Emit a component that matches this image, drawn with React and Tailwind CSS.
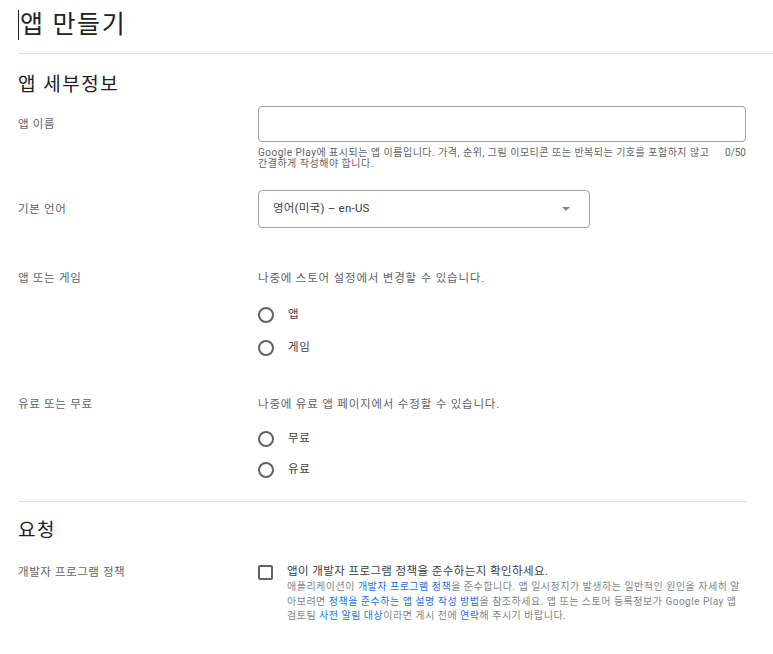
import { useState } from "react";

const font = "font-['Roboto','Noto_Sans_CJK_KR',sans-serif]";

const Radio = ({ label, checked, onClick }) => (
  <button onClick={onClick} className="flex h-[24px] items-center gap-[14px] text-left">
    <span className="flex h-[16px] w-[16px] items-center justify-center rounded-full border-2 border-[#5f6368]">
      {checked && <span className="h-[8px] w-[8px] rounded-full bg-[#1a73e8]" />}
    </span>
    <span className="text-[11.5px] tracking-[0.06em] text-[#3c4043]">{label}</span>
  </button>
);

const Link = ({ children }) => <span className="text-[#1a73e8]">{children}</span>;

export default function App() {
  const [type, setType] = useState(null);
  const [price, setPrice] = useState(null);
  const [agree, setAgree] = useState(false);
  const [name, setName] = useState("");

  return (
    <div className={`${font} min-h-[654px] bg-white pl-[18px] pt-[10px] text-[#202124]`}>
      {/* Title */}
      <div className="flex h-[30px] items-center">
        <span className="h-[30px] w-px bg-[#202124]" />
        <h1 className="pl-[1px] text-[25px] leading-[30px] font-normal tracking-[0.065em]">앱 만들기</h1>
      </div>
      <div className="mt-[13px] h-px bg-[#e0e0e0]" />

      <div className="pr-[27px]">
        {/* App details */}
        <h2 className="mt-[19px] text-[19px] leading-[24px] tracking-[0.08em]">앱 세부정보</h2>

        <div className="mt-[9px] flex">
          <div className="w-[240px] pt-[10px] text-[11.5px] leading-[16px] tracking-[0.06em] text-[#5f6368]">앱 이름</div>
          <div className="flex-1">
            <input
              value={name}
              onChange={(e) => setName(e.target.value.slice(0, 50))}
              className="h-[36px] w-full rounded-[4px] border border-[#9aa0a6] px-3 text-[12px] outline-none"
            />
            <div className="mt-[5px] flex justify-between text-[10px] leading-[11px] text-[#5f6368]">
              <p className="whitespace-nowrap tracking-[0.05em]">
                Google Play에 표시되는 앱 이름입니다. 가격, 순위, 그림 이모티콘 또는 반복되는 기호를 포함하지 않고
                <br />
                간결하게 작성해야 합니다.
              </p>
              <span>{name.length}/50</span>
            </div>
          </div>
        </div>

        <div className="mt-[21px] flex">
          <div className="w-[240px] pt-[11px] text-[11.5px] leading-[16px] tracking-[0.06em] text-[#5f6368]">기본 언어</div>
          <div className="flex h-[38px] w-[332px] items-center justify-between rounded-[4px] border border-[#9aa0a6] pl-[14px] pr-[19px] text-[11.5px] text-[#3c4043]">
            <span className="tracking-[0.02em]">영어(미국) – en-US</span>
            <svg width="8" height="4" viewBox="0 0 8 4">
              <path d="M0 0h8L4 4z" fill="#8a8a8a" />
            </svg>
          </div>
        </div>

        {/* App or game */}
        <div className="mt-[42px] flex">
          <div className="w-[240px] text-[11.5px] leading-[16px] tracking-[0.06em] text-[#5f6368]">앱 또는 게임</div>
          <div className="flex-1">
            <p className="text-[11.5px] leading-[16px] tracking-[0.07em] text-[#5f6368]">나중에 스토어 설정에서 변경할 수 있습니다.</p>
            <div className="mt-[17px] flex flex-col gap-[9px]">
              <Radio label="앱" checked={type === "app"} onClick={() => setType("app")} />
              <Radio label="게임" checked={type === "game"} onClick={() => setType("game")} />
            </div>
          </div>
        </div>

        {/* Paid or free */}
        <div className="mt-[36px] flex">
          <div className="w-[240px] text-[11.5px] leading-[16px] tracking-[0.06em] text-[#5f6368]">유료 또는 무료</div>
          <div className="flex-1">
            <p className="text-[11.5px] leading-[16px] tracking-[0.07em] text-[#5f6368]">나중에 유료 앱 페이지에서 수정할 수 있습니다.</p>
            <div className="mt-[15px] flex flex-col gap-[7px]">
              <Radio label="무료" checked={price === "free"} onClick={() => setPrice("free")} />
              <Radio label="유료" checked={price === "paid"} onClick={() => setPrice("paid")} />
            </div>
          </div>
        </div>

        <div className="mt-[19px] h-px bg-[#e0e0e0]" />

        {/* Declarations */}
        <h2 className="mt-[17px] text-[19px] leading-[24px] tracking-[0.08em]">요청</h2>

        <div className="mt-[20px] flex">
          <div className="w-[240px] pt-[1px] text-[11.5px] leading-[16px] tracking-[0.05em] text-[#5f6368]">개발자 프로그램 정책</div>
          <div className="flex flex-1 gap-[14px]">
            <button
              onClick={() => setAgree(!agree)}
              className={`mt-[2px] flex h-[15px] w-[15px] shrink-0 items-center justify-center rounded-[2px] border-2 ${
                agree ? "border-[#1a73e8] bg-[#1a73e8]" : "border-[#5f6368]"
              }`}
            >
              {agree && (
                <svg width="10" height="10" viewBox="0 0 24 24">
                  <path d="M4 12l5 5L20 6" stroke="white" strokeWidth="3" fill="none" />
                </svg>
              )}
            </button>
            <div>
              <p className="text-[11.5px] leading-[16px] tracking-[0.035em] text-[#3c4043]">앱이 개발자 프로그램 정책을 준수하는지 확인하세요.</p>
              <p className="mt-[1px] whitespace-nowrap text-[10px] leading-[14.5px] tracking-[0.05em] text-[#80868b]">
                애플리케이션이 <Link>개발자 프로그램 정책</Link>을 준수합니다. 앱 일시정지가 발생하는 일반적인 원인을 자세히 알
                <br />
                아보려면 <Link>정책을 준수하는 앱 설명 작성 방법</Link>을 참조하세요. 앱 또는 스토어 등록정보가 Google Play 앱
                <br />
                검토팀 <Link>사전 알림 대상</Link>이라면 게시 전에 <Link>연락</Link>해 주시기 바랍니다.
              </p>
            </div>
          </div>
        </div>
      </div>
    </div>
  );
}
